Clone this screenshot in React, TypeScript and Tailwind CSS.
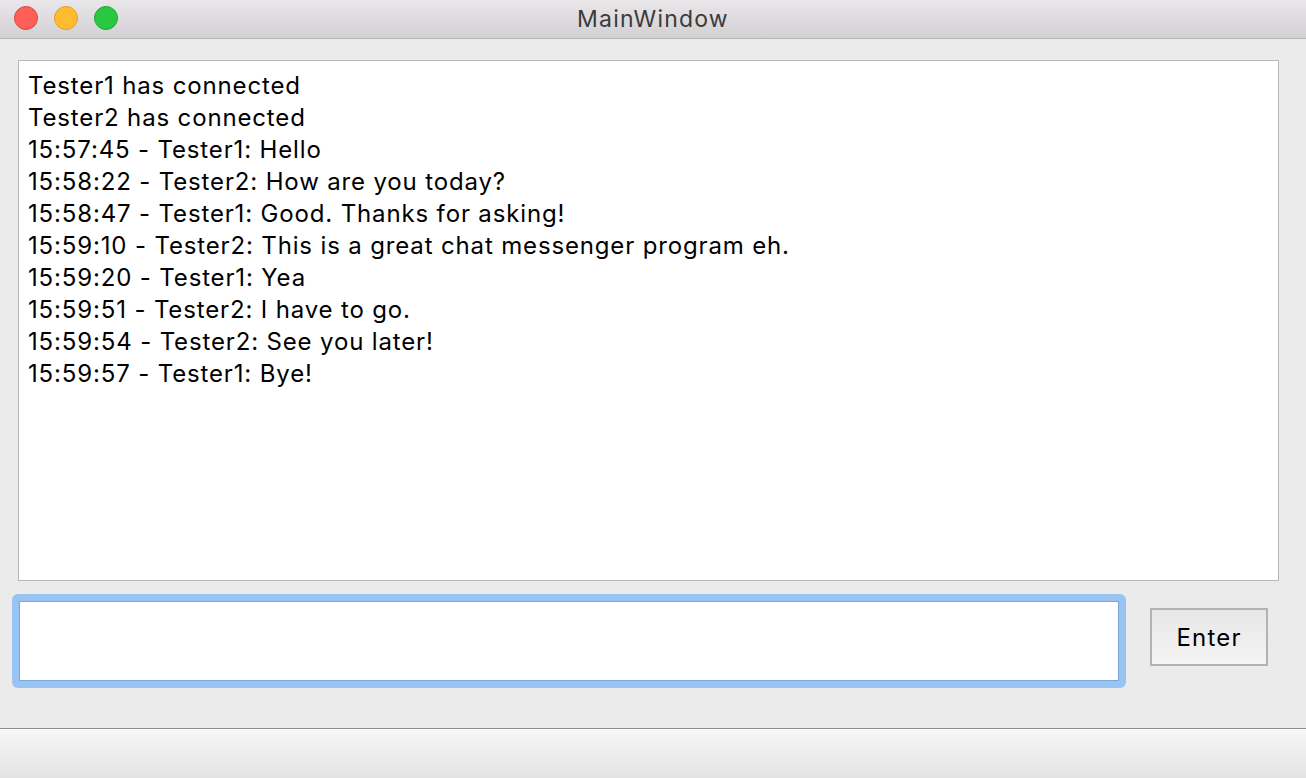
import React from "react";

const lines = [
  "Tester1 has connected",
  "Tester2 has connected",
  "15:57:45 - Tester1: Hello",
  "15:58:22 - Tester2: How are you today?",
  "15:58:47 - Tester1: Good. Thanks for asking!",
  "15:59:10 - Tester2: This is a great chat messenger program eh.",
  "15:59:20 - Tester1: Yea",
  "15:59:51 - Tester2: I have to go.",
  "15:59:54 - Tester2: See you later!",
  "15:59:57 - Tester1: Bye!",
];

export default function App() {
  return (
    <div
      className="w-[1306px] h-[778px] flex flex-col bg-[#ebebeb] overflow-hidden"
      style={{ fontFamily: "Inter, 'Noto Sans', sans-serif" }}
    >
      <div className="relative h-[39px] flex items-center justify-center bg-gradient-to-b from-[#e9e7e9] to-[#d2d0d2] border-b border-[#b4b4b4]">
        <div className="absolute left-[14px] top-[6px] flex gap-[16px]">
          <div className="w-[24px] h-[24px] rounded-full bg-[#fe5f57] border border-[#e0443e]" />
          <div className="w-[24px] h-[24px] rounded-full bg-[#febc2e] border border-[#dea123]" />
          <div className="w-[24px] h-[24px] rounded-full bg-[#29c840] border border-[#1aab29]" />
        </div>
        <span className="text-[23px] tracking-[1.2px] text-[#3b3b3b] leading-none">MainWindow</span>
      </div>
      <div className="flex-1 flex flex-col">
        <div className="mt-[21px] ml-[18px] mr-[27px] h-[521px] bg-white border border-[#b8b8b8] pt-[9px] pl-[9px]">
          {lines.map((l, i) => (
            <div key={i} className="text-[24px] leading-[32px] tracking-[0.85px] text-black whitespace-pre">
              {l}
            </div>
          ))}
        </div>
        <div className="mt-[13px] flex items-start">
          <div className="ml-[12px] w-[1114px] h-[94px] p-[7px] rounded-[6px] bg-[#98c3f3]">
            <div className="w-full h-full bg-white border border-[#7ea6da]" />
          </div>
          <div className="ml-[24px] mt-[14px] w-[118px] h-[58px] border-2 border-[#b2b2b2] bg-gradient-to-b from-[#e7e7e7] to-[#f4f4f4] flex items-center justify-center">
            <span className="text-[24px] tracking-[1.2px] text-black leading-none mt-[2px]">Enter</span>
          </div>
        </div>
      </div>
      <div className="h-[50px] border-t border-[#8e8e8e] bg-gradient-to-b from-[#f7f7f7] to-[#e3e3e3]" />
    </div>
  );
}
